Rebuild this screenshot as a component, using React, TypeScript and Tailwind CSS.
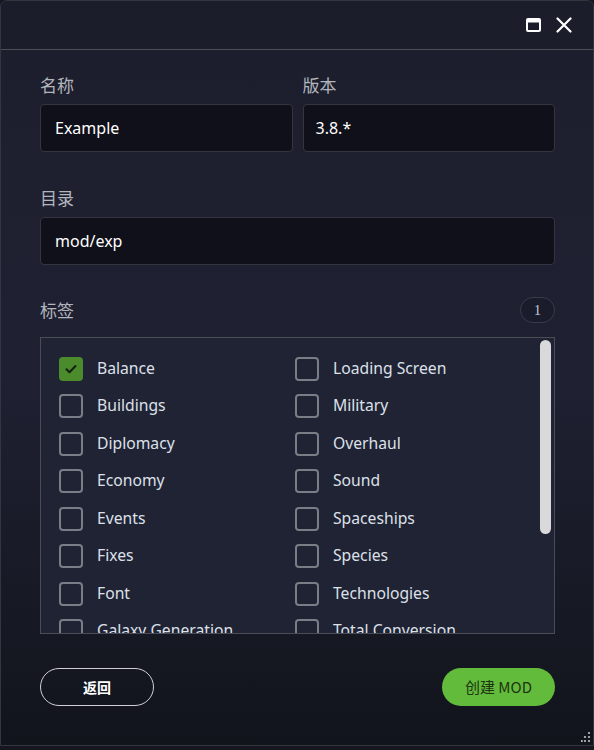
import { useState } from 'react'

const TAGS_LEFT = ['Balance', 'Buildings', 'Diplomacy', 'Economy', 'Events', 'Fixes', 'Font', 'Galaxy Generation']
const TAGS_RIGHT = ['Loading Screen', 'Military', 'Overhaul', 'Sound', 'Spaceships', 'Species', 'Technologies', 'Total Conversion']

const cjk = "font-['Noto_Sans_CJK_SC','Noto_Sans',sans-serif]"

function Check({ label, checked, onToggle }: { label: string; checked: boolean; onToggle: () => void }) {
  return (
    <div className="flex h-[37.5px] items-center cursor-pointer" onClick={onToggle}>
      <span
        className={`flex h-[24px] w-[24px] shrink-0 items-center justify-center rounded-[4px] border-2 ${
          checked ? 'border-[#4b8b2b] bg-[#4b8b2b]' : 'border-[#7b7d86]'
        }`}
      >
        {checked && (
          <svg width="14" height="14" viewBox="0 0 14 14" fill="none">
            <path d="M2.5 7.2l3 3 6-6.2" stroke="#15210f" strokeWidth="2" strokeLinecap="round" strokeLinejoin="round" />
          </svg>
        )}
      </span>
      <span className="ml-[14px] whitespace-nowrap text-[15.7px] text-[#dde0e8] font-['Noto_Sans',sans-serif]">{label}</span>
    </div>
  )
}

export default function App() {
  const [checked, setChecked] = useState<string[]>(['Balance'])
  const toggle = (t: string) =>
    setChecked((c) => (c.includes(t) ? c.filter((x) => x !== t) : [...c, t]))

  return (
    <div className="h-[750px] w-[594px] bg-[#15161e]">
      <div className="relative flex h-[746px] flex-col overflow-hidden rounded-t-[7px] border border-[#34363f] bg-gradient-to-b from-[#1d1e2c] via-[#1f2133] to-[#12141c]">
        {/* title bar */}
        <div className="flex h-[49px] shrink-0 items-center justify-end gap-[15px] border-b border-[#4c4e58] bg-[#1c1d2b] pr-[21px]">
          <svg width="15" height="14" viewBox="0 0 15 14" fill="none">
            <rect x="1" y="1" width="13" height="12" rx="1" stroke="#fff" strokeWidth="2" />
            <rect x="1" y="1" width="13" height="3.5" fill="#fff" />
          </svg>
          <svg width="16" height="16" viewBox="0 0 16 16" fill="none">
            <path d="M1.5 1.5l13 13M14.5 1.5l-13 13" stroke="#fff" strokeWidth="2.2" strokeLinecap="round" />
          </svg>
        </div>

        <div className="flex flex-1 flex-col pl-[39px] pr-[38px]">
          <div className="mt-[23px] grid grid-cols-2 gap-[10px]">
            <div>
              <div className={`${cjk} mb-[7px] text-[17px] leading-[24px] text-[#b3b5bd]`}>名称</div>
              <div className="flex h-[48px] items-center rounded-[4px] border border-[#34363f] bg-[#0f1019] px-[14px] text-[16px] text-white font-['Noto_Sans',sans-serif]">
                Example
              </div>
            </div>
            <div>
              <div className={`${cjk} mb-[7px] text-[17px] leading-[24px] text-[#b3b5bd]`}>版本</div>
              <div className="flex h-[48px] items-center rounded-[4px] border border-[#34363f] bg-[#0f1019] px-[12px] text-[16px] text-white font-['Noto_Sans',sans-serif]">
                3.8.*
              </div>
            </div>
          </div>

          <div className={`${cjk} mt-[34px] mb-[7px] text-[17px] leading-[24px] text-[#b3b5bd]`}>目录</div>
          <div className="flex h-[48px] items-center rounded-[4px] border border-[#34363f] bg-[#0f1019] px-[14px] text-[16px] text-white font-['Noto_Sans',sans-serif]">
            mod/exp
          </div>

          <div className="mt-[32px] flex items-center justify-between">
            <div className={`${cjk} text-[17px] leading-[24px] text-[#b3b5bd]`}>标签</div>
            <div className="flex h-[26px] w-[35px] items-center justify-center rounded-full border border-[#383b4c] bg-[#1a1c2b] text-[14px] text-[#c9ccd8] font-['Liberation_Serif',serif]">
              1
            </div>
          </div>

          <div className="relative mt-[14px] h-[297px] overflow-hidden border border-[#4a4c56] bg-[#1f2334]">
            <div className="grid grid-cols-[236px_1fr] pl-[18px] pt-[12px]">
              <div>
                {TAGS_LEFT.map((t) => (
                  <Check key={t} label={t} checked={checked.includes(t)} onToggle={() => toggle(t)} />
                ))}
              </div>
              <div>
                {TAGS_RIGHT.map((t) => (
                  <Check key={t} label={t} checked={checked.includes(t)} onToggle={() => toggle(t)} />
                ))}
              </div>
            </div>
            {/* scrollbar thumb */}
            <div className="absolute right-[3px] top-[2px] h-[194px] w-[11px] rounded-full bg-[#d9d9d9]" />
          </div>

          <div className="mt-[34px] flex items-center justify-between">
            <button className={`${cjk} h-[38px] w-[114px] rounded-full border border-[#d0d0d4] text-[14px] font-bold text-white`}>
              返回
            </button>
            <button className={`${cjk} h-[38px] w-[113px] rounded-full bg-[#63bb3c] text-[15px] text-[#1d3410]`}>
              创建 MOD
            </button>
          </div>
        </div>

        {/* resize grip */}
        <svg className="absolute bottom-[2px] right-[2px]" width="10" height="14" viewBox="0 0 10 14">
          {[
            [8, 2],
            [8, 6],
            [4, 6],
            [8, 10],
            [4, 10],
            [0.8, 10],
          ].map(([x, y], i) => (
            <circle key={i} cx={x} cy={y + 2} r="1.1" fill="#bfc0c8" />
          ))}
        </svg>
      </div>
    </div>
  )
}
